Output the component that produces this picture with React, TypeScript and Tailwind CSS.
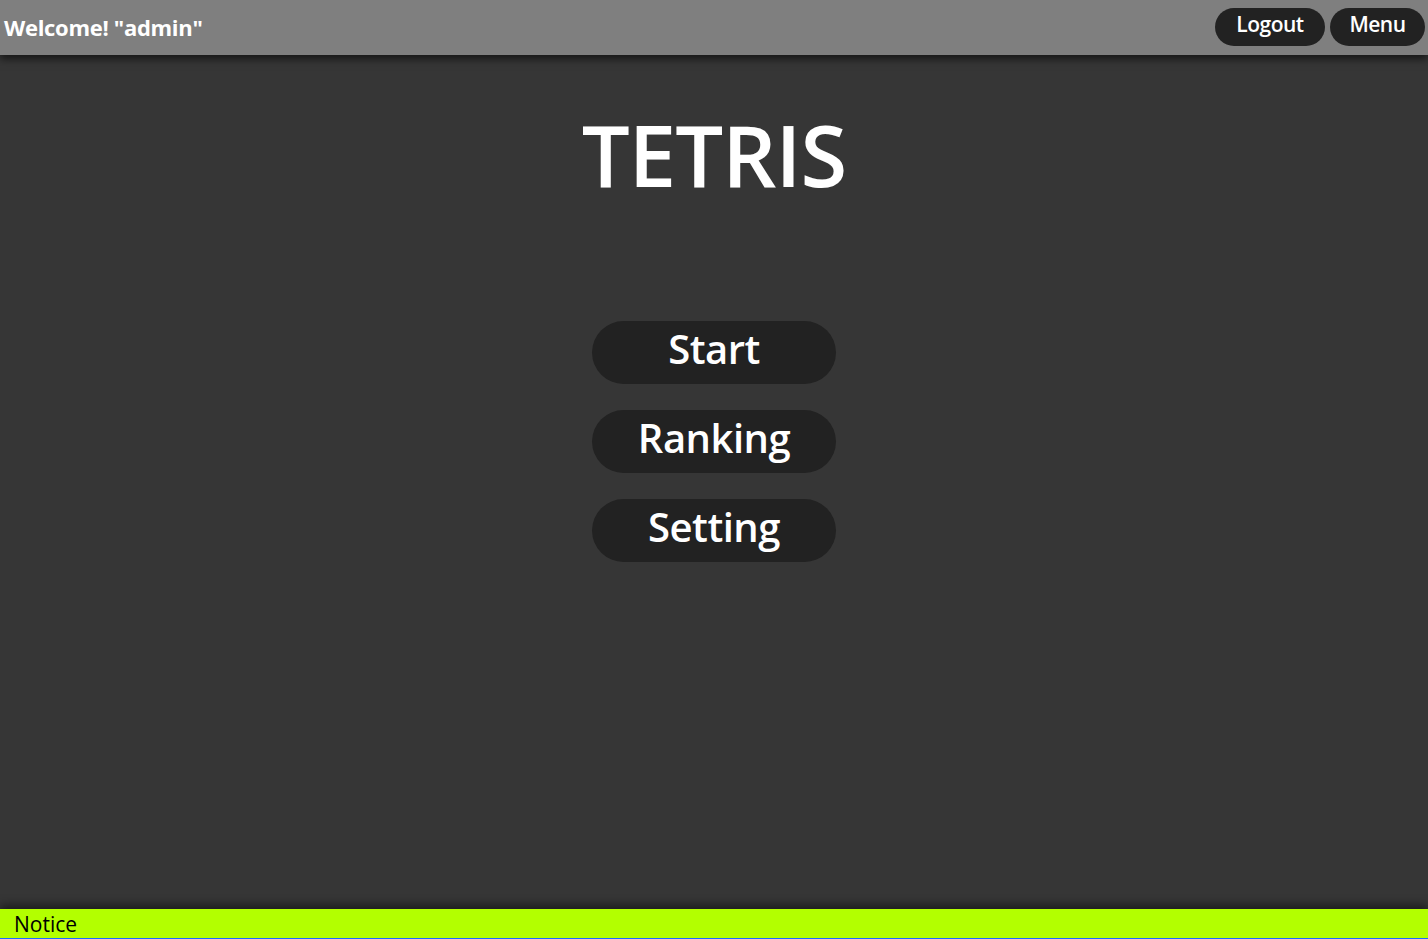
export default function App() {
  const items = ['Start', 'Ranking', 'Setting'];

  return (
    <div
      className="flex flex-col h-[939px] bg-[#363636] overflow-hidden"
      style={{ fontFamily: '"Open Sans", "Noto Sans", sans-serif' }}
    >
      <header className="relative z-10 flex items-center justify-between h-[55px] bg-[#7f7f7f] shadow-[0_4px_8px_rgba(0,0,0,0.6)]">
        <span className="pl-[4px] text-[22px] font-bold text-white tracking-[-0.3px]">
          Welcome! "admin"
        </span>
        <div className="flex items-center gap-[5px] pr-[3px] pb-[2px]">
          <button className="h-[38px] w-[110px] rounded-full bg-[#222222] text-[21px] font-semibold text-white leading-none pb-[5px] tracking-[-0.5px]">
            Logout
          </button>
          <button className="h-[38px] w-[95px] rounded-full bg-[#222222] text-[21px] font-semibold text-white leading-none pb-[5px] tracking-[-0.5px]">
            Menu
          </button>
        </div>
      </header>

      <main className="flex-1 flex flex-col items-center">
        <h1 className="mt-[39px] text-[85px] leading-[120px] font-semibold text-white tracking-[-1px]">
          TETRIS
        </h1>
        <div className="mt-[107px] flex flex-col gap-[26px]">
          {items.map((label) => (
            <button
              key={label}
              className="h-[63px] w-[244px] rounded-full bg-[#222222] text-[40px] font-semibold text-white leading-none pb-[8px] tracking-[-0.5px]"
            >
              {label}
            </button>
          ))}
        </div>
      </main>

      <footer className="relative h-[30px] bg-[#b3ff00] border-b border-[#1a6aff] shadow-[0_-4px_10px_rgba(0,0,0,0.5)]">
        <span className="block pl-[14px] pt-[1px] text-[21px] leading-[28px] text-black">
          Notice
        </span>
      </footer>
    </div>
  );
}
